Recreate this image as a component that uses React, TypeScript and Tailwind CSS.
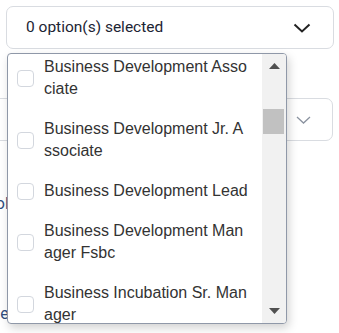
import { useState } from 'react';

const options = [
  'Business Development Associate',
  'Business Development Jr. Associate',
  'Business Development Lead',
  'Business Development Manager Fsbc',
  'Business Incubation Sr. Manager',
];

export default function App() {
  const [checked, setChecked] = useState<string[]>([]);

  const toggle = (o: string) =>
    setChecked((c) => (c.includes(o) ? c.filter((x) => x !== o) : [...c, o]));

  return (
    <div className="relative w-[339px] h-[333px] overflow-hidden bg-white">
      {/* top select */}
      <div className="px-[6px] pt-[6px]">
        <button
          type="button"
          className="w-[328px] h-[43px] flex items-center justify-between pl-[19px] pr-[22px] border border-[#d9dce1] rounded-[7px] bg-white"
        >
          <span className="font-['Roboto',sans-serif] text-[15.5px] text-[#1c2433]">
            {checked.length} option(s) selected
          </span>
          <svg width="18" height="10" viewBox="0 0 18 10" fill="none">
            <path d="M1.5 1.5 9 8.5 16.5 1.5" stroke="#222" strokeWidth="2" />
          </svg>
        </button>
      </div>

      {/* form behind the menu */}
      <div className="-ml-[12px] mt-[49px]">
        <div className="w-[345px] h-[43px] flex items-center justify-end pr-[21px] border border-[#d9dce1] rounded-[7px]">
          <svg width="15" height="8" viewBox="0 0 15 8" fill="none">
            <path d="M1 1 7.5 7 14 1" stroke="#8b93a0" strokeWidth="1.3" />
          </svg>
        </div>
        <p className="mt-[51px] -ml-[2px] font-['Roboto',sans-serif] text-[16px] text-[#2f4d7e]">Role type</p>
        <p className="mt-[86px] -ml-[22px] font-['Roboto',sans-serif] text-[16px] text-[#2f4d7e]">Name</p>
      </div>

      {/* dropdown menu */}
      <div className="absolute left-[7px] top-[53px] w-[280px] h-[271px] flex bg-white border border-[#8f98a8] rounded-[4px] overflow-hidden shadow-[2px_4px_10px_rgba(0,0,0,0.18)]">
        <div className="w-[254px] overflow-hidden">
          <ul className="-mt-[7px] font-['Liberation_Sans',Arial,sans-serif] text-[16px] leading-[22px] text-[#333]">
            {options.map((o) => (
              <li
                key={o}
                onClick={() => toggle(o)}
                className="flex items-center py-[9px] pl-[9px] cursor-pointer"
              >
                <span
                  className={`w-[17px] h-[17px] shrink-0 rounded-[4px] border ${
                    checked.includes(o) ? 'bg-[#2563eb] border-[#2563eb]' : 'border-[#d3d7de] bg-white'
                  }`}
                />
                <span className="ml-[10px] w-[205px] break-all">{o}</span>
              </li>
            ))}
          </ul>
        </div>
        <div className="w-[24px] bg-[#f1f1f1] flex flex-col">
          <div className="h-[24px] flex items-center justify-center">
            <svg width="11" height="6" viewBox="0 0 11 6">
              <path d="M0 6 5.5 0 11 6Z" fill="#505050" />
            </svg>
          </div>
          <div className="flex-1 pt-[31px] pl-[1px] pr-[2px]">
            <div className="h-[25px] bg-[#c1c1c1]" />
          </div>
          <div className="h-[24px] flex items-center justify-center">
            <svg width="11" height="6" viewBox="0 0 11 6">
              <path d="M0 0 5.5 6 11 0Z" fill="#505050" />
            </svg>
          </div>
        </div>
      </div>
    </div>
  );
}
